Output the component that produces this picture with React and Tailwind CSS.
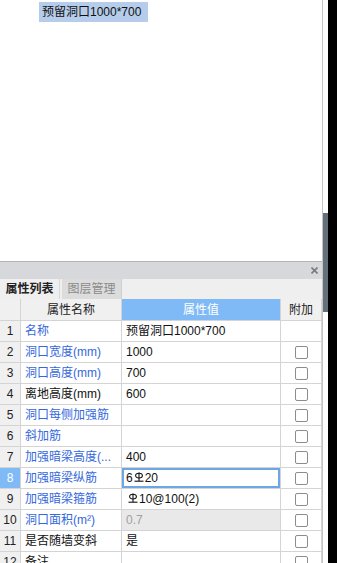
import React from "react";

const FONT = { fontFamily: '"Liberation Sans", "Noto Sans CJK SC", sans-serif' };

function Rebar() {
  return (
    <svg width="10" height="10" viewBox="0 0 10 10" className="inline-block mx-[1px] -mt-[2px] align-middle">
      <ellipse cx="5" cy="3.6" rx="3.4" ry="2.4" fill="none" stroke="#111" strokeWidth="1.1" />
      <line x1="5" y1="0.4" x2="5" y2="9" stroke="#111" strokeWidth="1.1" />
      <line x1="0.5" y1="9.2" x2="9.5" y2="9.2" stroke="#111" strokeWidth="1.1" />
    </svg>
  );
}

const rows = [
  { n: 1, name: "名称", blue: true, value: "预留洞口1000*700", box: false },
  { n: 2, name: "洞口宽度(mm)", blue: true, value: "1000" },
  { n: 3, name: "洞口高度(mm)", blue: true, value: "700" },
  { n: 4, name: "离地高度(mm)", blue: false, value: "600" },
  { n: 5, name: "洞口每侧加强筋", blue: true, value: "" },
  { n: 6, name: "斜加筋", blue: true, value: "" },
  { n: 7, name: "加强暗梁高度(...", blue: true, value: "400" },
  {
    n: 8,
    name: "加强暗梁纵筋",
    blue: true,
    selected: true,
    value: (
      <>
        6<Rebar />20
      </>
    ),
  },
  {
    n: 9,
    name: "加强暗梁箍筋",
    blue: true,
    value: (
      <>
        <span className="ml-[1px]" />
        <Rebar />10@100(2)
      </>
    ),
  },
  { n: 10, name: "洞口面积(m²)", blue: true, value: "0.7", disabled: true },
  { n: 11, name: "是否随墙变斜", blue: false, value: "是" },
  { n: 12, name: "备注", blue: false, value: "" },
];

export default function App() {
  return (
    <div className="w-[337px] h-[563px] overflow-hidden flex bg-white text-[12px] text-[#111]" style={FONT}>
      {/* main panel */}
      <div className="w-[323px] h-full flex flex-col border-r border-[#c4c4c4]">
        {/* drawing area */}
        <div className="h-[262px] shrink-0 border-b border-[#b4b4b4] pt-[2px] pl-[39px]">
          <div className="w-[109px] h-[20px] bg-[#b5cdeb] flex items-center pl-[3px] text-[12px] leading-none">
            预留洞口1000*700
          </div>
        </div>

        {/* title bar */}
        <div className="h-[17px] shrink-0 bg-[#d6d8dc] flex items-center justify-end pr-[4px]">
          <svg width="7" height="7" viewBox="0 0 7 7">
            <path d="M0.5 0.5L6.5 6.5M6.5 0.5L0.5 6.5" stroke="#7a7a7a" strokeWidth="1.6" />
          </svg>
        </div>

        {/* tabs */}
        <div className="h-[20px] shrink-0 bg-[#efefef] flex">
          <div className="w-[60px] flex items-center justify-center font-bold text-[#222] border-r border-[#d8d8d8]">
            属性列表
          </div>
          <div className="ml-[2px] w-[60px] flex items-center justify-center bg-[#dcdcdc] text-[#8a8a8a] border-r border-[#cfcfcf]">
            图层管理
          </div>
        </div>

        {/* header */}
        <div className="h-[22px] shrink-0 flex border-b border-[#d4d4d4]">
          <div className="w-[21px] bg-[#f0f0f0] border-r border-[#d4d4d4]" />
          <div className="w-[101px] bg-[#f0f0f0] border-r border-[#d4d4d4] flex items-center justify-center text-[#222]">
            属性名称
          </div>
          <div className="w-[159px] bg-[#7fbaf6] border-r border-[#d4d4d4] flex items-center justify-center text-white">
            属性值
          </div>
          <div className="w-[41px] bg-[#f0f0f0] border-r border-[#d4d4d4] flex items-center justify-center text-[#222]">
            附加
          </div>
        </div>

        {/* rows */}
        {rows.map((r) => (
          <div key={r.n} className="h-[21px] shrink-0 flex border-b border-[#d4d4d4]">
            <div
              className={
                r.selected
                  ? "w-[21px] bg-[#7fbaf6] text-white border-r border-[#d4d4d4] flex items-center justify-center"
                  : "w-[21px] bg-[#f0f0f0] text-[#222] border-r border-[#d4d4d4] flex items-center justify-center"
              }
            >
              {r.n}
            </div>
            <div
              className={
                r.blue
                  ? "w-[101px] border-r border-[#d4d4d4] flex items-center pl-[4px] text-[#3468dc] whitespace-nowrap overflow-hidden"
                  : "w-[101px] border-r border-[#d4d4d4] flex items-center pl-[4px] text-[#111] whitespace-nowrap overflow-hidden"
              }
            >
              {r.name}
            </div>
            <div
              className={
                r.disabled
                  ? "w-[159px] border-r border-[#d4d4d4] flex items-center pl-[4px] bg-[#e9e9e9] text-[#a0a0a0]"
                  : r.selected
                  ? "w-[159px] border-r border-[#d4d4d4] flex items-center pl-[4px] shadow-[inset_0_0_0_2px_#6ba7e4]"
                  : "w-[159px] border-r border-[#d4d4d4] flex items-center pl-[4px]"
              }
            >
              {r.value}
            </div>
            <div className="w-[41px] border-r border-[#d4d4d4] flex items-center justify-center">
              {r.box !== false && (
                <div className="w-[13px] h-[13px] rounded-[2px] border border-[#8c8c8c] bg-white" />
              )}
            </div>
          </div>
        ))}
      </div>

      {/* scroll strip */}
      <div className="w-[5px] h-full flex flex-col">
        <div className="h-[213px]" />
        <div className="h-[99px] bg-[#64707b]" />
      </div>
      <div className="flex-1 h-full bg-black" />
    </div>
  );
}
